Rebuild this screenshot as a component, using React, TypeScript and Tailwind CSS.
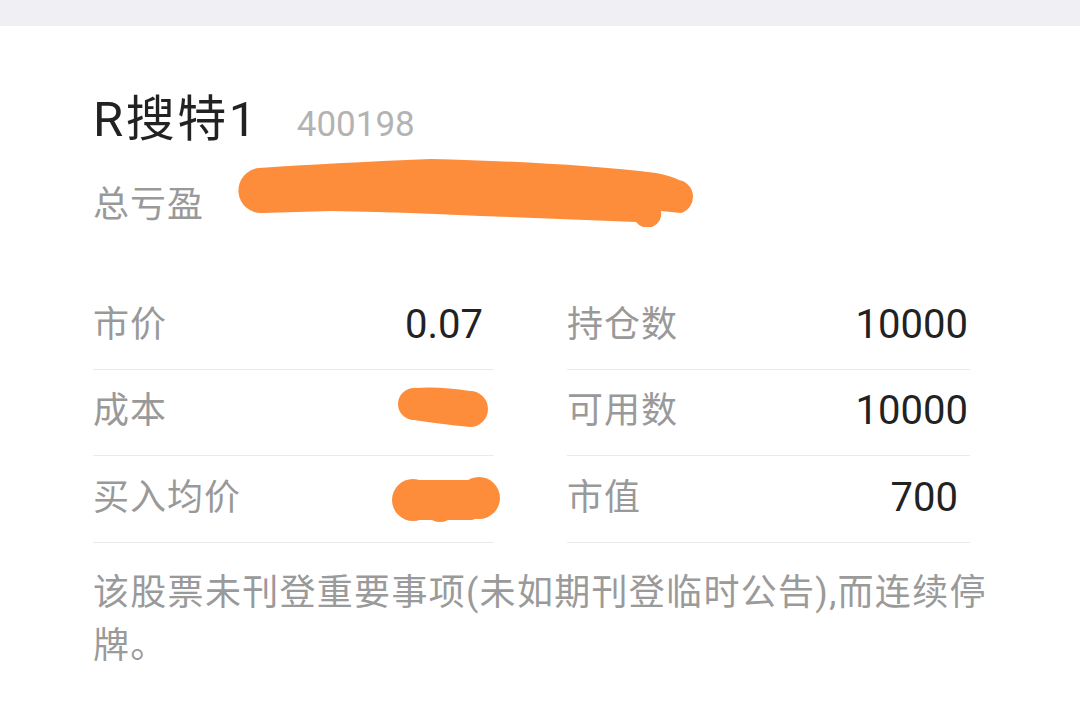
import React from "react";

const ORANGE = "#fd8c3b";

function PnlScribble() {
  return (
    <svg width="460" height="72" viewBox="234 156 460 72" className="block">
      <path
        d="M 258 169 Q 330 164 430 160 Q 560 163 655 174 Q 670 177 678 181 A 17 17 0 0 1 680 214 L 660 212 A 14 14 0 0 1 635 223 Q 560 220 480 217 Q 400 213 330 212 L 262 214 A 22 22 0 0 1 258 169 Z"
        fill={ORANGE}
      />
    </svg>
  );
}

function CostScribble() {
  return (
    <svg width="94" height="44" viewBox="395 385 94 44" className="block">
      <path
        d="M 414 388 Q 440 386 470 391 A 18 18 0 0 1 470 427 Q 440 424 414 420 A 16 16 0 0 1 414 388 Z"
        fill={ORANGE}
      />
    </svg>
  );
}

function AvgScribble() {
  return (
    <svg width="112" height="46" viewBox="390 478 112 46" className="block">
      <circle cx="413" cy="501" r="21" fill={ORANGE} />
      <circle cx="479" cy="499" r="21" fill={ORANGE} />
      <rect x="413" y="481" width="66" height="40" rx="8" fill={ORANGE} />
      <circle cx="440" cy="506" r="17" fill={ORANGE} />
    </svg>
  );
}

function Row({
  label,
  value,
  valueNode,
  pr,
}: {
  label: string;
  value?: string;
  valueNode?: React.ReactNode;
  pr: string;
}) {
  return (
    <div className={`flex h-[86.5px] items-center justify-between border-b border-[#ebebeb] pb-[2px] ${pr}`}>
      <span className="text-[36px] leading-none tracking-[1px] text-[#999999]">{label}</span>
      {valueNode ?? (
        <span className="text-[40px] leading-none text-[#222222]">{value}</span>
      )}
    </div>
  );
}

export default function App() {
  return (
    <div
      className="h-[705px] w-[1080px] overflow-hidden bg-white"
      style={{ fontFamily: 'Roboto, "Noto Sans CJK SC", sans-serif' }}
    >
      <div className="h-[26px] bg-[#efeff4]" />
      <div className="pl-[93px] pr-[80px] pt-[66px]">
        <div className="flex items-baseline">
          <span className="text-[49px] leading-[56px] tracking-[2.5px] text-[#222222]">R搜特1</span>
          <span className="ml-[38px] text-[35px] leading-[56px] text-[#b3b3b3]">400198</span>
        </div>
        <div className="mt-[26px] flex items-center">
          <span className="text-[36px] leading-[50px] tracking-[1px] text-[#999999]">总亏盈</span>
          <span className="relative -top-[14px] ml-[31px] -my-[10px]">
            <PnlScribble />
          </span>
        </div>
        <div className="mt-[52px] grid grid-cols-[401px_403px] gap-x-[73px]">
          <div className="flex flex-col">
            <Row label="市价" value="0.07" pr="pr-[11px]" />
            <Row
              label="成本"
              pr="pr-[5px]"
              valueNode={
                <span className="relative -top-[4px]">
                  <CostScribble />
                </span>
              }
            />
            <Row
              label="买入均价"
              pr="pr-[0px]"
              valueNode={
                <span className="relative top-[2px] -mr-[8px]">
                  <AvgScribble />
                </span>
              }
            />
          </div>
          <div className="flex flex-col">
            <Row label="持仓数" value="10000" pr="pr-[2px]" />
            <Row label="可用数" value="10000" pr="pr-[2px]" />
            <Row label="市值" value="700" pr="pr-[12px]" />
          </div>
        </div>
        <p className="mt-[24px] w-[905px] text-[36px] leading-[53px] tracking-[1.3px] text-[#9a9a9a]">
          该股票未刊登重要事项(未如期刊登临时公告),而连续停牌。
        </p>
      </div>
    </div>
  );
}
